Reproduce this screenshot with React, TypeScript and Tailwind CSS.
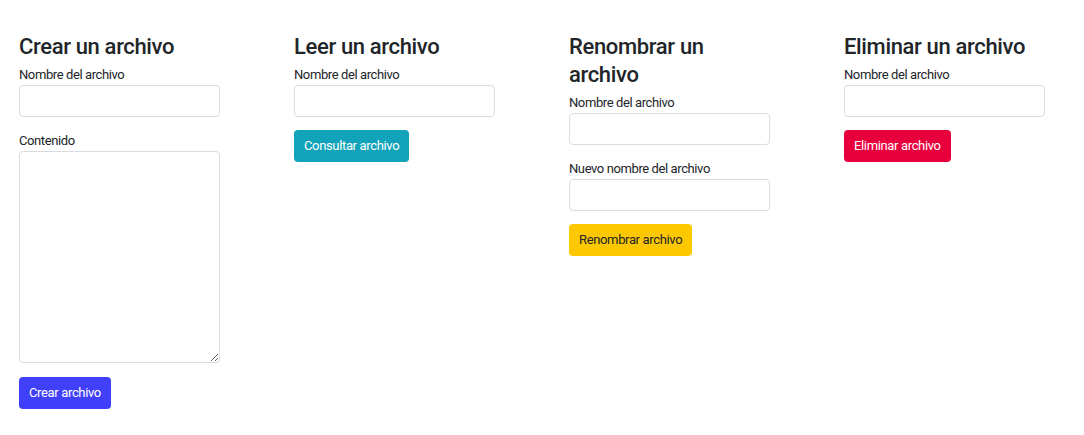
import React from "react";

const inputCls =
  "block w-full h-[32px] rounded-[4px] border border-[#d9dce0] bg-white px-2 outline-none";
const labelCls = "block text-[13px] leading-[15px] tracking-[-0.4px] text-[#212529] mb-[3px]";
const headCls = "text-[22px] leading-[28px] font-medium tracking-[-0.35px] text-[#212529] mb-[6px]";
const btnCls = "h-[32px] rounded-[4px] px-[10px] text-[13px] leading-[16px] tracking-[-0.35px]";

export default function App() {
  return (
    <div
      className="min-h-[435px] bg-white pt-[33px] pl-[19px]"
      style={{ fontFamily: "Roboto, 'Noto Sans', sans-serif" }}
    >
      <div className="grid grid-cols-[201px_201px_201px_201px] gap-x-[74px] items-start">
        <div>
          <h2 className={headCls}>Crear un archivo</h2>
          <label className={labelCls}>Nombre del archivo</label>
          <input className={inputCls} />
          <label className={labelCls + " mt-[16px]"}>Contenido</label>
          <textarea className="block w-full h-[212px] rounded-[4px] border border-[#d9dce0] bg-white px-2 outline-none" />
          <button className={btnCls + " mt-[14px] bg-[#4040fa] text-white"}>Crear archivo</button>
        </div>
        <div>
          <h2 className={headCls}>Leer un archivo</h2>
          <label className={labelCls}>Nombre del archivo</label>
          <input className={inputCls} />
          <button className={btnCls + " mt-[13px] bg-[#11a3b9] text-white"}>Consultar archivo</button>
        </div>
        <div>
          <h2 className={headCls}>Renombrar un archivo</h2>
          <label className={labelCls}>Nombre del archivo</label>
          <input className={inputCls} />
          <label className={labelCls + " mt-[16px]"}>Nuevo nombre del archivo</label>
          <input className={inputCls} />
          <button className={btnCls + " mt-[13px] bg-[#fdc800] text-[#212529]"}>Renombrar archivo</button>
        </div>
        <div>
          <h2 className={headCls}>Eliminar un archivo</h2>
          <label className={labelCls}>Nombre del archivo</label>
          <input className={inputCls} />
          <button className={btnCls + " mt-[13px] bg-[#e8003d] text-white"}>Eliminar archivo</button>
        </div>
      </div>
    </div>
  );
}
